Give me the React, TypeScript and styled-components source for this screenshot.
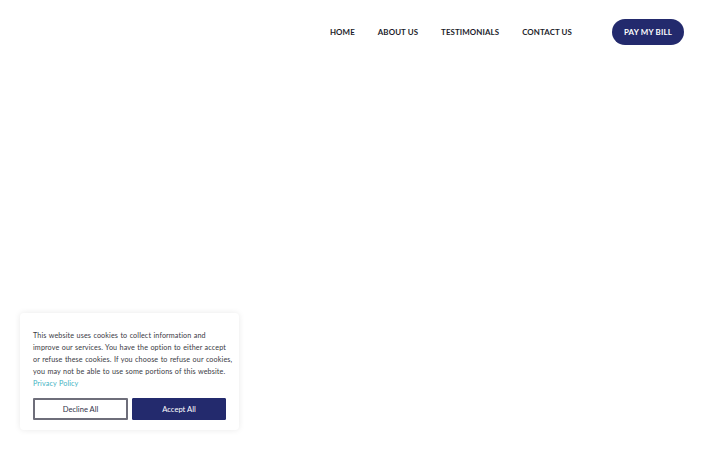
import React from "react";
import styled, { createGlobalStyle } from "styled-components";

const Global = createGlobalStyle`
  html, body { margin: 0; padding: 0; background: #fff; }
  body { font-family: "Lato", "Noto Sans", sans-serif; }
  * { box-sizing: border-box; }
`;

const Page = styled.div`
  position: relative;
  width: 720px;
  height: 450px;
  background: #fff;
  overflow: hidden;
`;

const Header = styled.header`
  display: flex;
  justify-content: flex-end;
  align-items: center;
  height: 64px;
  padding: 0 36px 0 0;
`;

const Nav = styled.nav`
  display: flex;
  align-items: center;
  gap: 23px;
  margin-right: 40px;
`;

const NavLink = styled.a`
  font-size: 7.9px;
  font-weight: 700;
  color: #1d1d2b;
  letter-spacing: 0.1px;
  text-decoration: none;
  cursor: pointer;
`;

const PayButton = styled.button`
  width: 72px;
  height: 26px;
  padding: 0;
  border: none;
  border-radius: 13px;
  background: #232a6d;
  color: #fff;
  font-family: inherit;
  font-size: 7.9px;
  font-weight: 700;
  letter-spacing: 0.2px;
  cursor: pointer;
`;

const Cookie = styled.div`
  position: absolute;
  left: 20px;
  top: 313px;
  width: 219px;
  padding: 17px 13px 10px 13px;
  background: #fff;
  border-radius: 4px;
  box-shadow: 0 0 6px rgba(0, 0, 0, 0.09);
`;

const CookieText = styled.p`
  margin: 0;
  font-size: 7.2px;
  line-height: 12px;
  letter-spacing: 0.12px;
  word-spacing: 0.4px;
  white-space: nowrap;
  color: #3a3a44;
`;

const PolicyLink = styled.a`
  display: block;
  color: #3fb3c3;
  text-decoration: none;
`;

const Buttons = styled.div`
  display: grid;
  grid-template-columns: 95px 94px;
  gap: 4px;
  margin-top: 8px;
`;

const CookieButton = styled.button<{ $primary?: boolean }>`
  height: 22px;
  font-family: inherit;
  font-size: 7.6px;
  cursor: pointer;
  background: ${(p) => (p.$primary ? "#232a6d" : "#fff")};
  color: ${(p) => (p.$primary ? "#fff" : "#33334a")};
  border: ${(p) => (p.$primary ? "1px solid #232a6d" : "2px solid #6e6e7a")};
  border-radius: 1px;
`;

export default function App() {
  return (
    <Page>
      <Global />
      <Header>
        <Nav>
          <NavLink>HOME</NavLink>
          <NavLink>ABOUT US</NavLink>
          <NavLink>TESTIMONIALS</NavLink>
          <NavLink>CONTACT US</NavLink>
        </Nav>
        <PayButton>PAY MY BILL</PayButton>
      </Header>
      <Cookie>
        <CookieText>
          This website uses cookies to collect information and
          <br />
          improve our services. You have the option to either accept
          <br />
          or refuse these cookies. If you choose to refuse our cookies,
          <br />
          you may not be able to use some portions of this website.
          <PolicyLink>Privacy Policy</PolicyLink>
        </CookieText>
        <Buttons>
          <CookieButton>Decline All</CookieButton>
          <CookieButton $primary>Accept All</CookieButton>
        </Buttons>
      </Cookie>
    </Page>
  );
}
